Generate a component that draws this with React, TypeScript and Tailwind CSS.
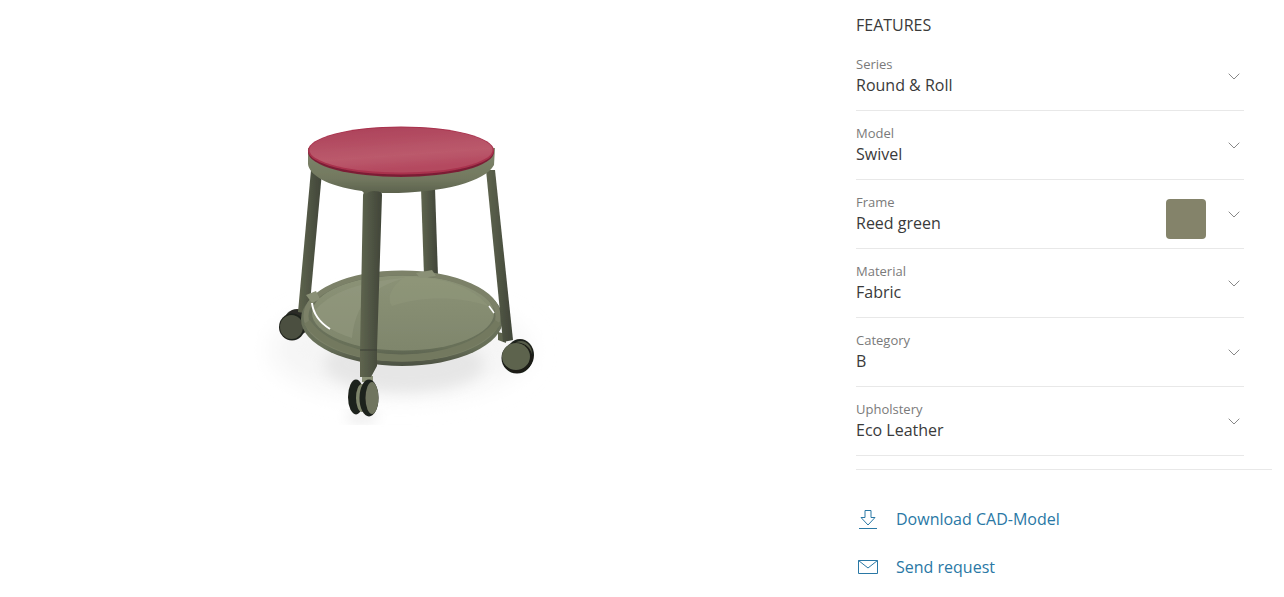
const FEATURES = [
  { label: "Series", value: "Round & Roll" },
  { label: "Model", value: "Swivel" },
  { label: "Frame", value: "Reed green", swatch: true },
  { label: "Material", value: "Fabric" },
  { label: "Category", value: "B" },
  { label: "Upholstery", value: "Eco Leather" },
];

const Chevron = () => (
  <svg width="12" height="7" viewBox="0 0 12 7" fill="none" stroke="#888" strokeWidth="1" className="shrink-0">
    <path d="M0.7 0.7 L6 6 L11.3 0.7" />
  </svg>
);

const Stool = () => (
  <svg width="320" height="330" viewBox="250 110 320 330" className="block">
    <defs>
      <linearGradient id="seat" x1="0" y1="0" x2="0.3" y2="1">
        <stop offset="0" stopColor="#ab3f58" />
        <stop offset="0.7" stopColor="#bb5a6c" />
        <stop offset="1" stopColor="#b4485f" />
      </linearGradient>
      <linearGradient id="disc" x1="0" y1="0" x2="0" y2="1">
        <stop offset="0" stopColor="#8b9276" />
        <stop offset="1" stopColor="#7f866c" />
      </linearGradient>
      <linearGradient id="ring" x1="0" y1="0" x2="0" y2="1">
        <stop offset="0" stopColor="#6d735d" />
        <stop offset="0.8" stopColor="#687059" />
        <stop offset="1" stopColor="#4c5142" />
      </linearGradient>
      <linearGradient id="leg" x1="0" y1="0" x2="1" y2="0">
        <stop offset="0" stopColor="#5f654f" />
        <stop offset="0.5" stopColor="#505544" />
        <stop offset="1" stopColor="#404538" />
      </linearGradient>
      <linearGradient id="band" x1="0" y1="0" x2="0" y2="1">
        <stop offset="0" stopColor="#7f866c" />
        <stop offset="0.65" stopColor="#72785f" />
        <stop offset="1" stopColor="#595f4b" />
      </linearGradient>
      <filter id="blur" x="-30%" y="-50%" width="160%" height="200%">
        <feGaussianBlur stdDeviation="12" />
      </filter>
      <filter id="soft" x="-30%" y="-50%" width="160%" height="200%">
        <feGaussianBlur stdDeviation="7" />
      </filter>
      <filter id="edge" x="-10%" y="-10%" width="120%" height="120%">
        <feGaussianBlur stdDeviation="0.5" />
      </filter>
    </defs>

    {/* floor shadow */}
    <ellipse cx="400" cy="350" rx="130" ry="48" fill="#f5f5f5" filter="url(#blur)" />
    <ellipse cx="404" cy="364" rx="80" ry="28" fill="#e6e6e6" filter="url(#soft)" />
    <ellipse cx="362" cy="417" rx="16" ry="4" fill="#e0e0e0" filter="url(#soft)" />

    <g filter="url(#edge)">
      {/* back leg */}
      <path d="M421 188 L435 188 L438 276 L424 276 Z" fill="url(#leg)" />

      {/* left caster + leg */}
      <ellipse cx="297" cy="322" rx="13" ry="13" fill="#2a2c25" />
      <ellipse cx="292" cy="327" rx="13" ry="13.5" fill="#1f211b" />
      <ellipse cx="291.5" cy="327" rx="11.5" ry="12" fill="#4b5040" />
      <path d="M311 170 L322 172 L309 314 L298 312 Z" fill="url(#leg)" />

      {/* lower ring and disc */}
      <ellipse cx="402" cy="319" rx="101" ry="47" fill="url(#ring)" />
      <ellipse cx="403" cy="313" rx="91" ry="37.5" fill="url(#disc)" />
      <path d="M314 312 C326 296 352 282 405 278 C370 288 356 304 352 338 C332 332 318 322 314 312 Z" fill="#959c81" opacity="0.5" />
      <path d="M405 277 C450 276 478 292 488 306 C460 296 420 296 392 306 C385 296 395 283 405 277 Z" fill="#939a7e" opacity="0.4" />
      <ellipse cx="402" cy="316" rx="96" ry="43" fill="none" stroke="#7b8168" strokeWidth="5" />
      <path d="M307 322 C322 345 360 358 402 358 C444 358 482 345 498 322" fill="none" stroke="#73795f" strokeWidth="7" />
      <path d="M312 303 C313 312 319 322 330 329" fill="none" stroke="#ffffff" strokeWidth="2" />
      <path d="M489 306 L494 313" fill="none" stroke="#ffffff" strokeWidth="1.5" />
      <path d="M416 273 L432 270 L436 276 L420 278 Z" fill="#8a9076" />
      <path d="M306 295 L316 291 L320 299 L312 303 Z" fill="#8a9076" />

      {/* right caster + leg */}
      <ellipse cx="520" cy="355" rx="14" ry="16" fill="#1f211b" />
      <ellipse cx="521" cy="354" rx="11" ry="13" fill="#565b48" />
      <ellipse cx="517" cy="358" rx="15.5" ry="15.5" fill="#1a1c17" />
      <ellipse cx="516" cy="356.5" rx="14" ry="13.5" fill="#5d634e" />
      <path d="M498 332 L506 334 L506 343 L498 340 Z" fill="#5d634e" />
      <path d="M486 170 L495 170 L513 340 L503 342 Z" fill="url(#leg)" />

      {/* front caster */}
      <rect x="362" y="376" width="11" height="6" fill="#8a9076" />
      <ellipse cx="356" cy="397" rx="8" ry="17.5" fill="#1f211b" />
      <ellipse cx="362" cy="398" rx="6" ry="14" fill="#7f866c" />
      <ellipse cx="369" cy="398" rx="9.5" ry="18.5" fill="#1f211b" />
      <ellipse cx="372" cy="398" rx="6.5" ry="16" fill="#6f755f" />

      {/* front leg */}
      <path d="M363 196 C363 192 366 190 369 190 L378 190 C381 190 382 192 382 195 L377 350 L377 366 L371 377 L360 377 L360 350 Z" fill="url(#leg)" />
      <path d="M360 350 L377 350" stroke="#3d4136" strokeWidth="1" />

      {/* seat frame */}
      <path d="M308 148 L308 164 C309 174 325 186 362 191 L366 195 C368 190 378 190 382 193 C440 194 485 182 494 165 L495 148 Z" fill="url(#band)" />

      {/* seat */}
      <ellipse cx="401" cy="152" rx="93" ry="25" fill="#7c1f36" />
      <ellipse cx="401" cy="150.5" rx="93" ry="24" fill="#a9334e" />
      <ellipse cx="401" cy="150" rx="91.5" ry="22.5" fill="url(#seat)" />
    </g>
  </svg>
);

export default function App() {
  return (
    <div className="flex h-[597px] w-[1284px] overflow-hidden bg-white font-['Open_Sans',sans-serif] text-[#3a3a3a]">
      <div className="w-[856px] shrink-0 pt-[110px] pl-[250px]">
        <Stool />
      </div>

      <div className="w-[416px] shrink-0 pt-[14px]">
        <h2 className="h-[28px] text-base leading-[22px]">FEATURES</h2>
        <div className="w-[388px]">
          {FEATURES.map((f) => (
            <div key={f.label} className="flex h-[69px] items-center border-b border-[#e8e8e8] pr-[4px]">
              <div className="flex-1">
                <div className="text-[13px] leading-[18px] text-[#7a7a7a]">{f.label}</div>
                <div className="text-base leading-[24px]">{f.value}</div>
              </div>
              {f.swatch && <div className="mt-[10px] mr-[22px] h-10 w-10 rounded bg-[#84836a]" />}
              <Chevron />
            </div>
          ))}
        </div>
        <div className="mt-[13px] border-t border-[#e8e8e8]" />

        <div className="mt-[37px] flex flex-col gap-[24px] text-base text-[#2a78a5]">
          <a className="flex h-[24px] items-center gap-[17px] pl-px leading-[24px]">
            <svg width="22" height="22" viewBox="0 0 22 22" fill="none" stroke="#2a78a5" strokeWidth="1">
              <path d="M8 2.5 H14 V9.5 H18 L11 17 L4 9.5 H8 Z" />
              <path d="M2 20.5 H20" />
            </svg>
            Download CAD-Model
          </a>
          <a className="flex h-[24px] items-center gap-[17px] pl-px leading-[24px]">
            <svg width="22" height="16" viewBox="0 0 22 16" fill="none" stroke="#2a78a5" strokeWidth="1">
              <path d="M1.5 1.5 H20.5 V14.5 H1.5 Z" />
              <path d="M1.5 1.5 L11 9 L20.5 1.5" />
            </svg>
            Send request
          </a>
        </div>
      </div>
    </div>
  );
}
